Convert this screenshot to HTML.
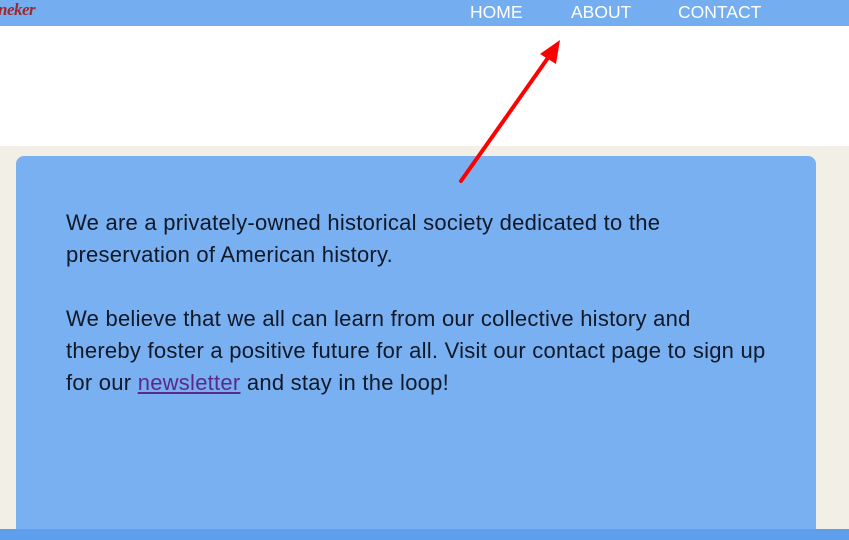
<!DOCTYPE html>
<html><head><style>
body{margin:0;width:849px;height:540px;overflow:hidden;background:#f2f0e6;font-family:"Liberation Sans",sans-serif;position:relative}
.hdr{position:absolute;left:0;top:0;width:849px;height:26px;background:#74aef0}
.logo{position:absolute;left:-2px;top:0px;font-family:"Liberation Serif",serif;font-style:italic;font-weight:bold;color:#a0282d;font-size:17px;letter-spacing:-0.5px}
.nav{position:absolute;top:2px;color:#fff;font-size:17.5px}
.white{position:absolute;left:0;top:26px;width:849px;height:120px;background:#fff}
.box{position:absolute;left:16px;top:156px;width:800px;height:380px;background:#78b0f1;border-radius:8px 8px 0 0}
.txt{position:absolute;left:66px;top:207px;white-space:nowrap;font-size:22px;line-height:32px;color:#111827;letter-spacing:0.25px}
.txt p{margin:0 0 32px}
a{color:#5b2a86}
.bot{position:absolute;left:0;top:529px;width:849px;height:11px;background:#5f9ded}
</style></head><body>
<div class="hdr"><span class="logo">neker</span>
<span class="nav" style="left:470px">HOME</span>
<span class="nav" style="left:571px">ABOUT</span>
<span class="nav" style="left:678px">CONTACT</span></div>
<div class="white"></div>
<div class="box"></div>
<div class="txt"><p>We are a privately-owned historical society dedicated to the<br>preservation of American history.</p>
<p>We believe that we all can learn from our collective history and<br>thereby foster a positive future for all. Visit our contact page to sign up<br>for our <a href="#">newsletter</a> and stay in the loop!</p></div>
<div class="bot"></div>
<svg style="position:absolute;left:0;top:0" width="849" height="540"><line x1="461" y1="181" x2="550" y2="55" stroke="#f00" stroke-width="4" stroke-linecap="round"/><polygon points="560,40 540,54 556,64" fill="#f00"/></svg>
</body></html>
